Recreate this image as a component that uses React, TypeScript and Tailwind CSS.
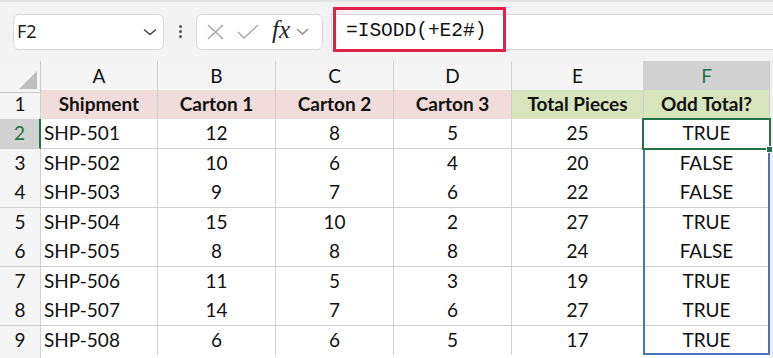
import React from "react";

type Row = [string, number, number, number, number, boolean];

const rows: Row[] = [
  ["SHP-501", 12, 8, 5, 25, true],
  ["SHP-502", 10, 6, 4, 20, false],
  ["SHP-503", 9, 7, 6, 22, false],
  ["SHP-504", 15, 10, 2, 27, true],
  ["SHP-505", 8, 8, 8, 24, false],
  ["SHP-506", 11, 5, 3, 19, true],
  ["SHP-507", 14, 7, 6, 27, true],
  ["SHP-508", 6, 6, 5, 17, true],
];

// row heights alternate 29 / 30 like the screenshot
const heights = ["h-[29px]", "h-[30px]", "h-[29px]", "h-[30px]", "h-[29px]", "h-[30px]", "h-[29px]", "h-[30px]", "h-[29px]"];

const cols = "grid grid-cols-[41px_117px_118px_118px_118px_132px_126px_1fr]";
const cell = "border-r border-b border-[#d0d0d0] flex items-center justify-center";

function Toolbar() {
  return (
    <div className="relative h-[61px] bg-[#f3f3f3] border-t-[2px] border-[#e2e2e2] flex items-center">
      <div className="ml-[13px] w-[151px] h-[36px] bg-white border border-[#d9d9d9] rounded-md flex items-center justify-between pl-[3px] pr-[6px]">
        <span className="text-[18px] text-[#222] font-['Noto_Sans',sans-serif]">F2</span>
        <svg width="14" height="8" viewBox="0 0 14 8" fill="none">
          <path d="M1 1.5 L7 6.5 L13 1.5" stroke="#444" strokeWidth="1.4" />
        </svg>
      </div>
      <div className="w-[32px] flex flex-col items-center gap-[2px]">
        <span className="w-[3px] h-[3px] rounded-full bg-[#555]" />
        <span className="w-[3px] h-[3px] rounded-full bg-[#555]" />
        <span className="w-[3px] h-[3px] rounded-full bg-[#555]" />
      </div>
      <div className="w-[127px] h-[36px] bg-white border border-[#d9d9d9] rounded-md flex items-center pl-[10px] gap-[13px]">
        <svg width="17" height="16" viewBox="0 0 17 16" fill="none">
          <path d="M1 1 L16 15 M16 1 L1 15" stroke="#a6a6a6" strokeWidth="1.4" />
        </svg>
        <svg width="22" height="16" viewBox="0 0 22 16" fill="none">
          <path d="M1 8 L7 14 L21 1" stroke="#a6a6a6" strokeWidth="1.4" />
        </svg>
        <div className="flex items-center gap-[6px]">
          <span className="text-[25px] leading-none italic text-[#222] font-['Liberation_Serif',serif] -mt-[4px]">fx</span>
          <svg width="13" height="7" viewBox="0 0 13 7" fill="none">
            <path d="M1 1 L6.5 6 L12 1" stroke="#8a8a8a" strokeWidth="1.3" />
          </svg>
        </div>
      </div>
      <div className="ml-[8px] flex-1 h-[36px] bg-white border-y border-l border-[#d9d9d9] flex items-center pl-[14px]">
        <span className="text-[19.5px] text-[#111] font-['Liberation_Mono',monospace]">=ISODD(+E2#)</span>
      </div>
      <div className="absolute left-[333px] top-[5px] w-[173px] h-[45px] border-[3px] border-[#e0214b]" />
    </div>
  );
}

function Sheet() {
  const letters = ["A", "B", "C", "D", "E", "F"];
  const heads = ["Shipment", "Carton 1", "Carton 2", "Carton 3", "Total Pieces", "Odd Total?"];
  return (
    <div className="relative font-['Lato',sans-serif] text-[19px] text-[#111]">
      <div className={`${cols} h-[29px]`}>
        <div className="border-r border-b border-[#c8c8c8] bg-[#f5f5f5] relative">
          <svg className="absolute right-[3px] bottom-[3px]" width="18" height="18" viewBox="0 0 18 18">
            <path d="M18 0 L18 18 L0 18 Z" fill="#bfbfbf" />
          </svg>
        </div>
        {letters.map((l) =>
          l === "F" ? (
            <div key={l} className="border-r border-[#c8c8c8] border-b-[2px] border-b-[#217346] bg-[#d2d2d2] text-[#217346] flex items-center justify-center pt-[1px]">
              {l}
            </div>
          ) : (
            <div key={l} className="border-r border-b border-[#d0d0d0] bg-[#f5f5f5] flex items-center justify-center">
              {l}
            </div>
          )
        )}
        <div className="border-b border-[#d0d0d0] bg-[#f0f0f0]" />
      </div>

      <div className={`${cols} ${heights[0]}`}>
        <div className={`${cell} bg-[#f5f5f5]`}>1</div>
        {heads.map((h, i) => (
          <div key={h} className={`${cell} font-bold ${i < 4 ? "bg-[#f2dcdb]" : "bg-[#d8e4bc]"}`}>
            {h}
          </div>
        ))}
        <div className="bg-[#f0f0f0]" />
      </div>

      {rows.map((r, idx) => {
        const n = idx + 2;
        const active = n === 2;
        return (
          <div key={r[0]} className={`${cols} ${heights[idx + 1]}`}>
            {active ? (
              <div className="border-b border-[#d0d0d0] border-r-[2px] border-r-[#217346] bg-[#d2d2d2] text-[#217346] flex items-center justify-center">
                {n}
              </div>
            ) : (
              <div className={`${cell} bg-[#f5f5f5]`}>{n}</div>
            )}
            <div className={`${cell} !justify-start pl-[3px] bg-white`}>{r[0]}</div>
            <div className={`${cell} bg-white`}>{r[1]}</div>
            <div className={`${cell} bg-white`}>{r[2]}</div>
            <div className={`${cell} bg-white`}>{r[3]}</div>
            <div className={`${cell} bg-white`}>{r[4]}</div>
            <div className={`${cell} bg-white`}>{r[5] ? "TRUE" : "FALSE"}</div>
            <div className="bg-[#f0f0f0]" />
          </div>
        );
      })}

      <div className={`${cols} h-[10px]`}>
        <div className="border-r border-[#d0d0d0] bg-[#f5f5f5]" />
        <div className="col-span-6 bg-white" />
        <div className="bg-[#f0f0f0]" />
      </div>

      {/* blue spill range F3:F9 */}
      <div className="absolute left-[643px] top-[87px] w-[127px] h-[207px] border-[2px] border-[#4a74c0] pointer-events-none" />
      {/* active cell F2 */}
      <div className="absolute left-[642px] top-[57px] w-[129px] h-[32px] border-[2px] border-[#217346] pointer-events-none" />
      <div className="absolute left-[766px] top-[85px] w-[7px] h-[7px] bg-[#217346] border border-white pointer-events-none" />
    </div>
  );
}

export default function App() {
  return (
    <div className="w-[773px] h-[358px] overflow-hidden bg-white">
      <Toolbar />
      <Sheet />
    </div>
  );
}
